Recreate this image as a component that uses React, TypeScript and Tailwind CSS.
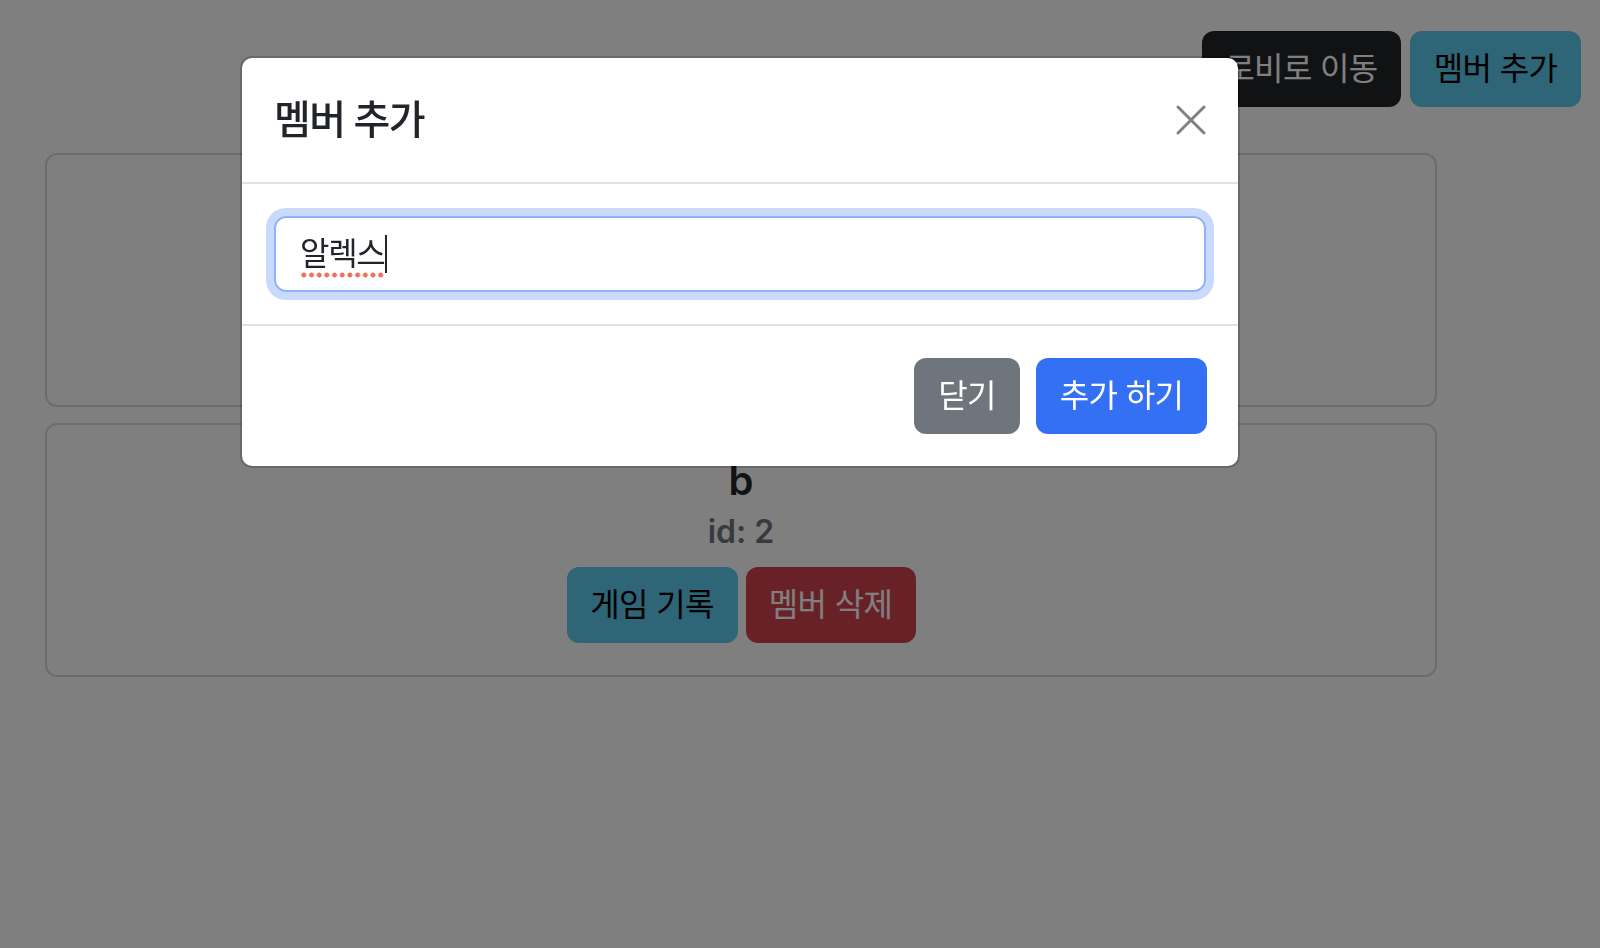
interface Member {
  id: number;
  name: string;
}

const members: Member[] = [
  { id: 1, name: 'a' },
  { id: 2, name: 'b' },
];

const MemberCard = ({ data }: { data: Member }) => {
  return (
    <div className="h-[254px] rounded-[12px] border-2 border-[#d9d9d9] flex flex-col items-center pt-[32px]">
      <p className="text-[40px] leading-[48px] font-semibold text-[#212529]">{data.name}</p>
      <p className="mt-[8px] text-[32px] leading-[38px] font-semibold text-[#6f767e]">id: {data.id}</p>
      <div className="mt-[16px] flex gap-2 tracking-[-0.04em]">
        <button className="h-[76px] w-[171px] rounded-[12px] bg-[#5ccaee] text-[32px] text-black">
          게임 기록
        </button>
        <button className="h-[76px] w-[170px] rounded-[12px] bg-[#d0444e] text-[32px] text-white">
          멤버 삭제
        </button>
      </div>
    </div>
  );
};

const AddMemberModal = () => {
  return (
    <div className="fixed inset-0 bg-black/50 pt-[56px] pl-[240px]">
      <div className="w-[1000px] rounded-[12px] border-2 border-black/[.175] bg-white bg-clip-padding">
        <div className="h-[126px] flex items-center justify-between pl-[32px] pr-[31px] border-b-2 border-[#dee2e6]">
          <h5 className="text-[40px] leading-[60px] font-medium tracking-[-0.04em] text-[#212529]">멤버 추가</h5>
          <button className="text-[#808080]">
            <svg width="32" height="32" viewBox="0 0 32 32" fill="none" stroke="currentColor" strokeWidth="3" strokeLinecap="round">
              <path d="M3 3 29 29M29 3 3 29" />
            </svg>
          </button>
        </div>
        <div className="p-[32px]">
          <div
            role="textbox"
            className="h-[76px] rounded-[12px] border-2 border-[#8db4f8] shadow-[0_0_0_8px_#c9dafc] flex items-center px-[24px] text-[32px] tracking-[-0.04em] text-[#212529]">
            <span className="bg-[radial-gradient(circle,#ef7064_2.2px,transparent_2.8px)] bg-[length:7.7px_6px] bg-bottom bg-repeat-x">
              알렉스
            </span>
            <span className="ml-[1px] h-[38px] w-[2px] bg-[#212529]" />
          </div>
        </div>
        <div className="h-[142px] border-t-2 border-[#dee2e6] flex items-center justify-end gap-4 pr-[31px] tracking-[-0.04em]">
          <button className="h-[76px] w-[106px] rounded-[12px] bg-[#6e757d] text-[32px] text-white">닫기</button>
          <button className="h-[76px] w-[171px] rounded-[12px] bg-[#3470f4] text-[32px] text-white">추가 하기</button>
        </div>
      </div>
    </div>
  );
};

export default function App() {
  return (
    <div className="relative min-h-screen bg-white font-[Inter,'Noto_Sans_CJK_KR',sans-serif]">
      <div className="flex justify-end gap-[9px] pt-[31px] pr-[19px] tracking-[-0.04em]">
        <button className="h-[76px] w-[199px] rounded-[12px] bg-[#222428] text-[32px] text-white">
          로비로 이동
        </button>
        <button className="h-[76px] w-[171px] rounded-[12px] bg-[#5ccaee] text-[32px] text-black">
          멤버 추가
        </button>
      </div>
      <div className="mt-[46px] ml-[45px] w-[1392px] flex flex-col gap-[16px]">
        {members.map((m) => (
          <MemberCard key={m.id} data={m} />
        ))}
      </div>
      <AddMemberModal />
    </div>
  );
}
